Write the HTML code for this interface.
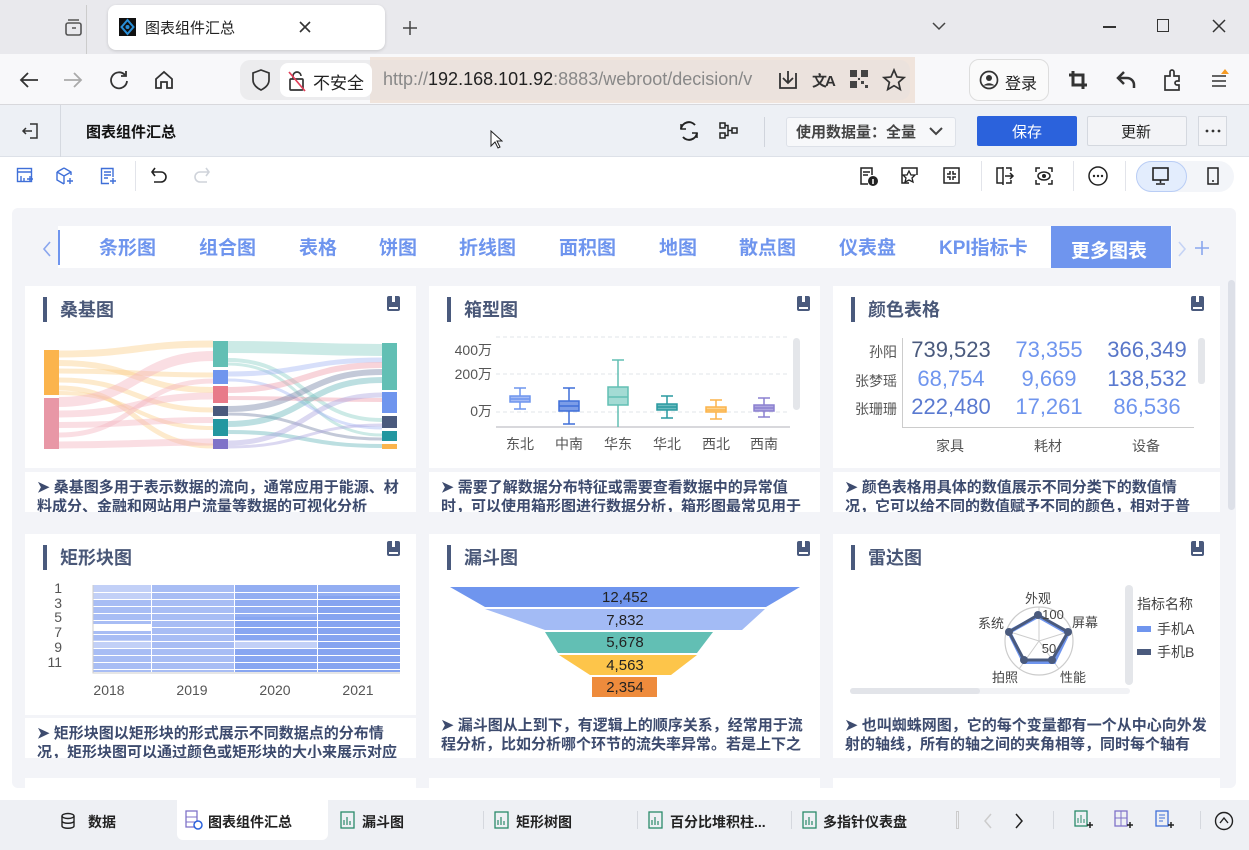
<!DOCTYPE html>
<html><head><meta charset="utf-8">
<style>
*{box-sizing:border-box;margin:0;padding:0}
body{width:1249px;height:850px;overflow:hidden;font-family:"Liberation Sans","Noto Sans CJK SC",sans-serif;background:#fff;position:relative;color:#222}
.a{position:absolute}
.t{position:absolute;white-space:nowrap}
.card{position:absolute;background:#fff}
.ttl{position:absolute;left:18px;top:11px;height:25px;border-left:4px solid #4a5a7d;padding-left:13px;font-size:18px;font-weight:bold;color:#4a5878;line-height:27px}
.bm{position:absolute;width:13px;height:15px;background:#4a5a7d;border-radius:2px}
.bm:after{content:"";position:absolute;left:2px;right:2px;bottom:2px;height:2px;background:#fff}
.bm:before{content:"";position:absolute;left:5px;top:0;width:3px;height:6px;background:#fff}
.desc{position:absolute;background:#fff;font-size:15px;font-weight:bold;color:#3d4b6e;line-height:19px;padding:6px 8px 0 12px;overflow:hidden}
.nav span{position:absolute;top:226px;font-size:19px;font-weight:bold;color:#6f95ee;line-height:46px}
.ic{position:absolute}
</style></head><body>
<div class="a" style="left:0;top:0;width:1249px;height:54px;background:#e9e9ed"></div>
<div class="a" style="left:86px;top:5px;width:1px;height:49px;background:#ccc"></div>
<svg class="ic" style="left:64px;top:18px" width="20" height="20" viewBox="0 0 20 20"><rect x="2" y="5" width="15" height="12" rx="2" fill="none" stroke="#555" stroke-width="1.6"/><path d="M4 2h11M8 10h4" stroke="#555" stroke-width="1.6"/></svg>
<div class="a" style="left:108px;top:5px;width:277px;height:45px;background:#fff;border-radius:8px;box-shadow:0 1px 3px rgba(0,0,0,.15)"></div>
<div class="a" style="left:119px;top:18px;width:17px;height:18px;background:#111"></div>
<svg class="ic" style="left:119px;top:18px" width="17" height="18"><path d="M8.5 2l6 7-6 7-6-7z" fill="none" stroke="#2a8fd8" stroke-width="2"/><circle cx="8.5" cy="9" r="2" fill="#2a8fd8"/></svg>
<div class="t" style="left:145px;top:17px;font-size:15px;color:#222">图表组件汇总</div>
<svg class="ic" style="left:299px;top:21px" width="12" height="12"><path d="M1 1l10 10M11 1L1 11" stroke="#333" stroke-width="1.6"/></svg>
<svg class="ic" style="left:402px;top:20px" width="16" height="16"><path d="M8 1v14M1 8h14" stroke="#444" stroke-width="1.5"/></svg>
<svg class="ic" style="left:930px;top:20px" width="20" height="14"><path d="M3 3l6 6 6-6" fill="none" stroke="#444" stroke-width="1.5"/></svg>
<div class="a" style="left:1103px;top:26px;width:13px;height:1.5px;background:#333"></div>
<div class="a" style="left:1157px;top:19px;width:12px;height:13px;border:1.5px solid #333"></div>
<svg class="ic" style="left:1212px;top:19px" width="14" height="14"><path d="M1 1l12 12M13 1L1 13" stroke="#333" stroke-width="1.5"/></svg>
<div class="a" style="left:0;top:54px;width:1249px;height:51px;background:#f8f8fa;border-bottom:1px solid #d8d8dc"></div>
<svg class="ic" style="left:18px;top:70px" width="22" height="20"><path d="M20 10H4M10 3l-7 7 7 7" fill="none" stroke="#333" stroke-width="1.8"/></svg>
<svg class="ic" style="left:62px;top:70px" width="22" height="20"><path d="M2 10h16M12 3l7 7-7 7" fill="none" stroke="#aaa" stroke-width="1.8"/></svg>
<svg class="ic" style="left:108px;top:69px" width="22" height="22"><path d="M17 6A8 8 0 1 0 19 12" fill="none" stroke="#333" stroke-width="1.8"/><path d="M18 2v5h-5" fill="none" stroke="#333" stroke-width="1.8"/></svg>
<svg class="ic" style="left:153px;top:69px" width="22" height="22"><path d="M3 10L11 3l8 7v9h-5v-6h-6v6H3z" fill="none" stroke="#333" stroke-width="1.8"/></svg>
<div class="a" style="left:240px;top:60px;width:675px;height:40px;background:#ececee;border-radius:10px"></div>
<div class="a" style="left:370px;top:57px;width:545px;height:46px;background:#f0e4dc"></div>
<div class="a" style="left:370px;top:60px;width:540px;height:40px;background:#ebe2dd;border-radius:0 10px 10px 0"></div>
<svg class="ic" style="left:250px;top:68px" width="22" height="24"><path d="M11 2l8 3v7c0 5-4 8-8 10-4-2-8-5-8-10V5z" fill="none" stroke="#333" stroke-width="1.7"/></svg>
<div class="a" style="left:280px;top:63px;width:92px;height:34px;background:#fff;border-radius:8px"></div>
<svg class="ic" style="left:287px;top:69px" width="20" height="24"><rect x="3" y="10" width="13" height="11" rx="1" fill="none" stroke="#333" stroke-width="1.7"/><path d="M6 10V7a4 4 0 0 1 8 0" fill="none" stroke="#333" stroke-width="1.7"/><path d="M2 3l16 19" stroke="#e2405a" stroke-width="1.7"/></svg>
<div class="t" style="left:313px;top:69px;font-size:17px;color:#222">不安全</div>
<div class="t" style="left:383px;top:69px;font-size:18px;color:#888">http://<span style="color:#222">192.168.101.92</span>:8883/webroot/decision/v</div>
<div class="a" style="left:755px;top:62px;width:20px;height:36px;background:#ebe2dd"></div>
<svg class="ic" style="left:776px;top:68px" width="24" height="24"><path d="M4 5v15h16V5M12 3v11M7 10l5 5 5-5" fill="none" stroke="#333" stroke-width="1.8"/></svg>
<div class="t" style="left:812px;top:70px;font-size:15px;color:#333;font-weight:bold;letter-spacing:-2px">文A</div>
<svg class="ic" style="left:849px;top:69px" width="20" height="20"><g fill="#444"><rect x="1" y="1" width="7" height="7"/><rect x="12" y="1" width="7" height="7"/><rect x="1" y="12" width="7" height="7"/><rect x="12" y="12" width="3" height="3"/><rect x="16" y="16" width="3" height="3"/><rect x="9" y="9" width="2" height="2"/></g></svg>
<svg class="ic" style="left:882px;top:68px" width="24" height="24"><path d="M12 2l3 7 7 .6-5.4 4.7 1.7 7.2L12 17.7 5.7 21.5l1.7-7.2L2 9.6 9 9z" fill="none" stroke="#333" stroke-width="1.7"/></svg>
<div class="a" style="left:969px;top:59px;width:80px;height:42px;border:1px solid #ddd;border-radius:10px;background:#fafafa"></div>
<svg class="ic" style="left:979px;top:70px" width="20" height="20"><circle cx="10" cy="10" r="8.5" fill="none" stroke="#333" stroke-width="1.7"/><circle cx="10" cy="8" r="3" fill="#333"/><path d="M4.5 15.5c3-3 8-3 11 0" fill="#333"/></svg>
<div class="t" style="left:1005px;top:70px;font-size:16px;color:#222">登录</div>
<svg class="ic" style="left:1067px;top:69px" width="22" height="22"><path d="M6 2v14h14M2 6h14v14" fill="none" stroke="#333" stroke-width="3"/></svg>
<svg class="ic" style="left:1115px;top:69px" width="22" height="22"><path d="M9 3L3 9l6 6M3 9h9a7 7 0 0 1 7 7v3" fill="none" stroke="#333" stroke-width="2.5"/></svg>
<svg class="ic" style="left:1162px;top:68px" width="22" height="24"><path d="M3 8h5V4a2 2 0 0 1 4 0v4h5v5h-2a2 2 0 0 0 0 4h2v5H3z" fill="none" stroke="#333" stroke-width="1.7"/></svg>
<svg class="ic" style="left:1210px;top:66px" width="22" height="24"><path d="M2 10h14M2 15h14M2 20h14" stroke="#333" stroke-width="1.6"/><path d="M15 3l4 5h-8z" fill="#f59a23"/></svg>
<div class="a" style="left:0;top:105px;width:1249px;height:52px;background:#edf0f5;border-bottom:1px solid #dde1e8"></div>
<div class="a" style="left:60px;top:105px;width:1px;height:52px;background:#d5d9e0"></div>
<svg class="ic" style="left:21px;top:122px" width="20" height="18"><path d="M9 2h7v14H9M2 9h9M5 6L2 9l3 3" fill="none" stroke="#333" stroke-width="1.5"/></svg>
<div class="t" style="left:86px;top:121px;font-size:15px;font-weight:bold;color:#111">图表组件汇总</div>
<svg class="ic" style="left:489px;top:130px" width="14" height="20"><path d="M2 1v15l4-4 3 6 2-1-3-6h5z" fill="#fff" stroke="#222" stroke-width="1"/></svg>
<svg class="ic" style="left:678px;top:120px" width="22" height="22"><path d="M17 5A8 8 0 0 0 3 9M5 17a8 8 0 0 0 14-4" fill="none" stroke="#222" stroke-width="2"/><path d="M3 4v5h5M19 18v-5h-5" fill="none" stroke="#222" stroke-width="1.5"/></svg>
<svg class="ic" style="left:718px;top:121px" width="22" height="20"><rect x="2" y="2" width="5" height="5" fill="none" stroke="#222" stroke-width="1.5"/><rect x="2" y="12" width="5" height="5" fill="none" stroke="#222" stroke-width="1.5"/><rect x="14" y="7" width="5" height="5" fill="none" stroke="#222" stroke-width="1.5"/><path d="M7 4.5h3v10H7M10 9.5h4" fill="none" stroke="#222" stroke-width="1.5"/></svg>
<div class="a" style="left:764px;top:117px;width:1px;height:30px;background:#d0d4dc"></div>
<div class="a" style="left:786px;top:117px;width:170px;height:30px;background:#f7f8fa;border:1px solid #dde1e8;border-radius:3px"></div>
<div class="t" style="left:796px;top:121px;font-size:15px;color:#444;font-weight:bold">使用数据量：全量</div>
<svg class="ic" style="left:928px;top:126px" width="16" height="12"><path d="M2 2l6 6 6-6" fill="none" stroke="#444" stroke-width="2"/></svg>
<div class="a" style="left:977px;top:116px;width:100px;height:30px;background:#2b62dc;border-radius:2px"></div>
<div class="t" style="left:1012px;top:121px;font-size:15px;color:#fff">保存</div>
<div class="a" style="left:1087px;top:116px;width:100px;height:30px;background:#f3f4f7;border:1px solid #d4d8df;border-radius:2px"></div>
<div class="t" style="left:1121px;top:121px;font-size:15px;color:#222">更新</div>
<div class="a" style="left:1198px;top:116px;width:29px;height:30px;background:#f3f4f7;border:1px solid #d4d8df"></div>
<svg class="ic" style="left:1204px;top:129px" width="18" height="4"><circle cx="3" cy="2" r="1.4" fill="#333"/><circle cx="9" cy="2" r="1.4" fill="#333"/><circle cx="15" cy="2" r="1.4" fill="#333"/></svg>
<svg class="ic" style="left:16px;top:167px" width="18" height="18"><rect x="1.5" y="1.5" width="14" height="13" fill="none" stroke="#3f6fd8" stroke-width="1.4"/><path d="M1.5 5h14M5 9v6M8 11v4M11 12h6M14 9v6" stroke="#3f6fd8" stroke-width="1.4"/></svg>
<svg class="ic" style="left:56px;top:167px" width="18" height="18"><path d="M8 1l7 4v3M1 5l7-4M1 5v8l7 4M1 5l7 4 7-4M8 9v8" fill="none" stroke="#3f6fd8" stroke-width="1.4"/><path d="M11 14h6M14 11v6" stroke="#3f6fd8" stroke-width="1.4"/></svg>
<svg class="ic" style="left:100px;top:167px" width="18" height="18"><path d="M13 10V1.5H1.5v15H9M4 5h7M4 8h7M4 11h4M10 14h6M13 11v6" fill="none" stroke="#3f6fd8" stroke-width="1.4"/></svg>
<div class="a" style="left:135px;top:161px;width:1px;height:30px;background:#e2e4ea"></div>
<svg class="ic" style="left:150px;top:166px" width="20" height="18"><path d="M5 2L2 6l3 4M2 6h9a5 5 0 0 1 0 10H4" fill="none" stroke="#222" stroke-width="1.6"/></svg>
<svg class="ic" style="left:191px;top:166px" width="20" height="18"><path d="M15 2l3 4-3 4M18 6H9a5 5 0 0 0 0 10h7" fill="none" stroke="#cfd3da" stroke-width="1.6"/></svg>
<svg class="ic" style="left:859px;top:166px" width="20" height="22"><path d="M13 9V2H2v16h7M4 6h7M4 9h5" fill="none" stroke="#222" stroke-width="1.5"/><circle cx="14" cy="15" r="5" fill="#222"/><path d="M14 13v5" stroke="#fff" stroke-width="1.5"/></svg>
<svg class="ic" style="left:900px;top:166px" width="20" height="20"><path d="M9 17H2V2h15v7" fill="none" stroke="#222" stroke-width="1.5"/><path d="M9 5l2 4h4l-3 3 1 4-4-2-4 2 1-4-3-3h4z" fill="none" stroke="#222" stroke-width="1.3"/></svg>
<svg class="ic" style="left:942px;top:166px" width="20" height="20"><rect x="2" y="2" width="15" height="15" fill="none" stroke="#222" stroke-width="1.5"/><path d="M8 5v3H5M11 5v3h3M8 14v-3H5M11 14v-3h3" fill="none" stroke="#222" stroke-width="1.5"/></svg>
<div class="a" style="left:981px;top:161px;width:1px;height:30px;background:#e2e4ea"></div>
<svg class="ic" style="left:995px;top:166px" width="20" height="20"><path d="M8 2H2v15h6M8 1v18M11 2h5v3M11 17h5v-3M10 10h8M15 7l3 3-3 3" fill="none" stroke="#222" stroke-width="1.5"/></svg>
<svg class="ic" style="left:1034px;top:166px" width="20" height="20"><path d="M2 6V2h4M14 2h4v4M2 14v4h4M18 14v4h-4" fill="none" stroke="#222" stroke-width="1.5"/><ellipse cx="10" cy="10" rx="6" ry="4" fill="none" stroke="#222" stroke-width="1.5"/><circle cx="10" cy="10" r="2" fill="#222"/></svg>
<div class="a" style="left:1073px;top:161px;width:1px;height:30px;background:#e2e4ea"></div>
<svg class="ic" style="left:1087px;top:165px" width="22" height="22"><circle cx="11" cy="11" r="9" fill="none" stroke="#222" stroke-width="1.5"/><circle cx="7" cy="11" r="1.2" fill="#222"/><circle cx="11" cy="11" r="1.2" fill="#222"/><circle cx="15" cy="11" r="1.2" fill="#222"/></svg>
<div class="a" style="left:1125px;top:161px;width:1px;height:30px;background:#e2e4ea"></div>
<div class="a" style="left:1136px;top:161px;width:98px;height:31px;background:#f3f5f9;border-radius:16px"></div>
<div class="a" style="left:1136px;top:161px;width:51px;height:31px;background:#e3edfd;border:1px solid #b9cdf5;border-radius:16px"></div>
<svg class="ic" style="left:1151px;top:166px" width="20" height="20"><rect x="2" y="2" width="15" height="12" fill="none" stroke="#222" stroke-width="1.6"/><path d="M9.5 14v3M5 18h9" stroke="#222" stroke-width="1.6"/></svg>
<svg class="ic" style="left:1205px;top:166px" width="16" height="20"><rect x="3" y="2" width="10" height="16" fill="none" stroke="#222" stroke-width="1.5"/><path d="M7 15h2" stroke="#222" stroke-width="1.5"/></svg>
<div class="a" style="left:12px;top:208px;width:1224px;height:580px;background:#f3f4f8;border-radius:6px"></div>
<svg class="ic" style="left:42px;top:240px" width="10" height="18"><path d="M8 2L2 9l6 7" fill="none" stroke="#8aa6ee" stroke-width="1.6"/></svg>
<div class="a" style="left:58px;top:226px;width:1114px;height:42px;background:#fff"></div>
<div class="a" style="left:58px;top:230px;width:2px;height:35px;background:#6f95ee"></div>
<div class="nav">
<span style="left:99px">条形图</span><span style="left:199px">组合图</span><span style="left:299px">表格</span><span style="left:379px">饼图</span><span style="left:459px">折线图</span><span style="left:559px">面积图</span><span style="left:659px">地图</span><span style="left:739px">散点图</span><span style="left:839px">仪表盘</span><span style="left:939px">KPI指标卡</span>
</div>
<div class="a" style="left:1051px;top:226px;width:120px;height:42px;background:#6f95ee"></div>
<div class="t" style="left:1071px;top:236px;font-size:19px;font-weight:bold;color:#fff">更多图表</div>
<svg class="ic" style="left:1177px;top:240px" width="10" height="18"><path d="M2 2l6 7-6 7" fill="none" stroke="#c5d3f5" stroke-width="1.6"/></svg>
<svg class="ic" style="left:1194px;top:240px" width="16" height="16"><path d="M8 1v14M1 8h14" stroke="#8aa6ee" stroke-width="1.6"/></svg>
<div class="a" style="left:1228px;top:280px;width:7px;height:230px;background:#dde0e8;border-radius:4px"></div>

<div class="card" style="left:25px;top:286px;width:391px;height:182px">
<div class="ttl">桑基图</div><div class="bm" style="left:362px;top:10px"></div>
</div>
<svg class="a" style="left:25px;top:286px" width="391" height="182">
<g transform="translate(-25,-286)" fill="none" stroke-opacity=".45">
<g stroke="#fbd08f">
<path d="M59 354C136 354 136 344 213 344" stroke-width="7"/>
<path d="M59 363C136 363 136 390 213 390" stroke-width="6"/>
<path d="M59 371C136 371 136 375 213 375" stroke-width="5"/>
<path d="M59 380C136 380 136 410 213 410" stroke-width="5"/>
<path d="M59 388C136 388 136 446 213 446" stroke-width="5"/>
<path d="M59 393C136 393 136 428 213 428" stroke-width="4"/>
</g>
<g stroke="#f3b5c0">
<path d="M59 402C136 402 136 356 213 356" stroke-width="10"/>
<path d="M59 414C136 414 136 396 213 396" stroke-width="7"/>
<path d="M59 425C136 425 136 420 213 420" stroke-width="6"/>
<path d="M59 435C136 435 136 381 213 381" stroke-width="5"/>
<path d="M59 445C136 445 136 442 213 442" stroke-width="7"/>
</g>
<path d="M228 347C305 347 305 350 382 350" stroke="#8fd0c8" stroke-width="12"/>
<path d="M228 360C305 360 305 420 382 420" stroke="#8fd0c8" stroke-width="4"/>
<path d="M228 364C305 364 305 435 382 435" stroke="#8fd0c8" stroke-width="3"/>
<path d="M228 374C305 374 305 360 382 360" stroke="#a6b8f5" stroke-width="5"/>
<path d="M228 380C305 380 305 428 382 428" stroke="#a6b8f5" stroke-width="3"/>
<path d="M228 390C305 390 305 365 382 365" stroke="#f0a0ad" stroke-width="6"/>
<path d="M228 398C305 398 305 400 382 400" stroke="#f0a0ad" stroke-width="4"/>
<path d="M228 409C305 409 305 372 382 372" stroke="#7a88a8" stroke-width="6"/>
<path d="M228 414C305 414 305 439 382 439" stroke="#7a88a8" stroke-width="3"/>
<path d="M228 424C305 424 305 380 382 380" stroke="#6ab8bc" stroke-width="6"/>
<path d="M228 432C305 432 305 446 382 446" stroke="#6ab8bc" stroke-width="4"/>
<path d="M228 443C305 443 305 395 382 395" stroke="#b0a8e0" stroke-width="5"/>
<path d="M228 447C305 447 305 425 382 425" stroke="#b0a8e0" stroke-width="3"/>
</g>
<g transform="translate(-25,-286)">
<rect x="44" y="350" width="15" height="45" fill="#fbb44c"/><rect x="44" y="398" width="15" height="51" fill="#e897a6"/>
<rect x="213" y="341" width="15" height="26" fill="#62bfb4"/><rect x="213" y="370" width="15" height="14" fill="#6f95ee"/><rect x="213" y="386" width="15" height="17" fill="#e87a89"/><rect x="213" y="406" width="15" height="10" fill="#4a5a7d"/><rect x="213" y="419" width="15" height="17" fill="#2397a0"/><rect x="213" y="439" width="15" height="10" fill="#7f72c8"/>
<rect x="382" y="343" width="15" height="47" fill="#62bfb4"/><rect x="382" y="392" width="15" height="21" fill="#6f95ee"/><rect x="382" y="416" width="15" height="12" fill="#4a5a7d"/><rect x="382" y="431" width="15" height="10" fill="#2397a0"/><rect x="382" y="444" width="15" height="5" fill="#fbb44c"/>
</g></svg>
<div class="desc" style="left:25px;top:472px;width:391px;height:40px">➤ 桑基图多用于表示数据的流向，通常应用于能源、材料成分、金融和网站用户流量等数据的可视化分析</div>

<div class="card" style="left:429px;top:286px;width:391px;height:182px">
<div class="ttl">箱型图</div><div class="bm" style="left:368px;top:10px"></div>
</div>
<svg class="a" style="left:429px;top:286px" width="391" height="182">
<g transform="translate(-429,-286)" font-family="Liberation Sans,Noto Sans CJK SC,sans-serif" font-size="14" fill="#555">
<path d="M496 337H790M496 374H790M496 412H790" stroke="#e2e4e8" stroke-dasharray="4 3"/>
<path d="M496 427H790" stroke="#d8d8dc" stroke-width="2"/>
<rect x="793" y="338" width="7" height="72" rx="3.5" fill="#e4e6ea"/>
<text x="492" y="355" text-anchor="end">400万</text><text x="492" y="379" text-anchor="end">200万</text><text x="492" y="416" text-anchor="end">0万</text>
<g stroke-width="1.5">
<g stroke="#6f95ee"><path d="M520 388v8M520 402v7M514 388h12M514 409h12"/><rect x="510" y="396" width="20" height="6" fill="#a6bcf5"/><path d="M510 399h20"/></g>
<g stroke="#3f6fd8"><path d="M569 388v13M569 411v13M563 388h12M563 424h12"/><rect x="559" y="401" width="20" height="10" fill="#7c9de8"/><path d="M559 406h20"/></g>
<g stroke="#62bfb4"><path d="M618 360v27M618 405v22M612 360h12"/><rect x="608" y="387" width="20" height="18" fill="#a3dbd4"/><path d="M608 397h20"/></g>
<g stroke="#2a9aa0"><path d="M667 396v8M667 410v8M661 396h12M661 418h12"/><rect x="657" y="404" width="20" height="6" fill="#6cbcc0"/><path d="M657 407h20"/></g>
<g stroke="#fbb44c"><path d="M716 400v7M716 412v7M710 400h12M710 419h12"/><rect x="706" y="407" width="20" height="5" fill="#fcd38f"/><path d="M706 410h20"/></g>
<g stroke="#8c80d0"><path d="M764 398v7M764 411v6M758 398h12M758 417h12"/><rect x="754" y="405" width="20" height="6" fill="#aea6e0"/><path d="M754 408h20"/></g>
</g>
<text x="520" y="449" text-anchor="middle">东北</text><text x="569" y="449" text-anchor="middle">中南</text><text x="618" y="449" text-anchor="middle">华东</text><text x="667" y="449" text-anchor="middle">华北</text><text x="716" y="449" text-anchor="middle">西北</text><text x="764" y="449" text-anchor="middle">西南</text>
</g></svg>
<div class="desc" style="left:429px;top:472px;width:391px;height:40px">➤ 需要了解数据分布特征或需要查看数据中的异常值时，可以使用箱形图进行数据分析，箱形图最常见用于</div>

<div class="card" style="left:833px;top:286px;width:387px;height:182px">
<div class="ttl">颜色表格</div><div class="bm" style="left:358px;top:10px"></div>
</div>
<div class="a" style="left:902px;top:338px;width:1px;height:90px;background:#ccc"></div>
<div class="a" style="left:902px;top:427px;width:292px;height:1px;background:#ccc"></div>
<div class="a" style="left:1198px;top:338px;width:7px;height:46px;background:#e4e6ea;border-radius:3px"></div>
<div class="t" style="left:845px;top:342px;font-size:14px;color:#555;width:52px;text-align:right">孙阳</div>
<div class="t" style="left:845px;top:371px;font-size:14px;color:#555;width:52px;text-align:right">张梦瑶</div>
<div class="t" style="left:845px;top:399px;font-size:14px;color:#555;width:52px;text-align:right">张珊珊</div>
<div style="font-size:22px;color:#6f95ee">
<div class="t" style="left:906px;top:337px;width:90px;text-align:center;color:#4a5a7d">739,523</div>
<div class="t" style="left:1004px;top:337px;width:90px;text-align:center">73,355</div>
<div class="t" style="left:1102px;top:337px;width:90px;text-align:center;color:#5876c8">366,349</div>
<div class="t" style="left:906px;top:366px;width:90px;text-align:center">68,754</div>
<div class="t" style="left:1004px;top:366px;width:90px;text-align:center">9,669</div>
<div class="t" style="left:1102px;top:366px;width:90px;text-align:center;color:#5a7ad0">138,532</div>
<div class="t" style="left:906px;top:394px;width:90px;text-align:center;color:#5a7ad0">222,480</div>
<div class="t" style="left:1004px;top:394px;width:90px;text-align:center">17,261</div>
<div class="t" style="left:1102px;top:394px;width:90px;text-align:center">86,536</div>
</div>
<div class="t" style="left:936px;top:436px;font-size:14px;color:#555">家具</div>
<div class="t" style="left:1034px;top:436px;font-size:14px;color:#555">耗材</div>
<div class="t" style="left:1132px;top:436px;font-size:14px;color:#555">设备</div>
<div class="desc" style="left:833px;top:472px;width:387px;height:40px;padding-right:22px">➤ 颜色表格用具体的数值展示不同分类下的数值情况，它可以给不同的数值赋予不同的颜色，相对于普通</div>

<div class="card" style="left:25px;top:534px;width:391px;height:181px">
<div class="ttl">矩形块图</div><div class="bm" style="left:362px;top:7px"></div>
</div>
<svg class="a" style="left:25px;top:534px" width="391" height="181">
<g transform="translate(-25,-534)" font-family="Liberation Sans,sans-serif" font-size="14" fill="#555">
<rect x="93" y="585" width="307" height="87" fill="#a8bdf4"/>
<g fill="#86a4f0">
<rect x="234" y="585" width="166" height="87" opacity=".6"/>
<rect x="317" y="596" width="83" height="76"/>
<rect x="234" y="617" width="83" height="55" opacity=".8"/>
</g>
<g fill="#c2d0f7"><rect x="93" y="585" width="58" height="14"/><rect x="93" y="640" width="58" height="9"/><rect x="234" y="640" width="83" height="9"/></g>
<rect x="93" y="624" width="58" height="7" fill="#fff"/>
<g stroke="#fff" stroke-width="1"><path d="M93 592.5H400M93 599.5H400M93 606.5H400M93 613.5H400M93 620.5H400M93 627.5H400M93 634.5H400M93 641.5H400M93 648.5H400M93 655.5H400M93 662.5H400M93 669.5H400"/><path d="M151.5 585v87M234.5 585v87M317.5 585v87"/></g>
<path d="M93 585v88H400" stroke="#ccc" fill="none"/>
<text x="62" y="593" text-anchor="end">1</text><text x="62" y="608" text-anchor="end">3</text><text x="62" y="622" text-anchor="end">5</text><text x="62" y="637" text-anchor="end">7</text><text x="62" y="652" text-anchor="end">9</text><text x="62" y="667" text-anchor="end">11</text>
<text x="109" y="695" text-anchor="middle">2018</text><text x="192" y="695" text-anchor="middle">2019</text><text x="275" y="695" text-anchor="middle">2020</text><text x="358" y="695" text-anchor="middle">2021</text>
</g></svg>
<div class="desc" style="left:25px;top:718px;width:391px;height:40px">➤ 矩形块图以矩形块的形式展示不同数据点的分布情况，矩形块图可以通过颜色或矩形块的大小来展示对应</div>

<div class="card" style="left:429px;top:534px;width:391px;height:224px">
<div class="ttl">漏斗图</div><div class="bm" style="left:368px;top:7px"></div>
</div>
<svg class="a" style="left:429px;top:534px" width="391" height="181">
<g transform="translate(-429,-534)" font-family="Liberation Sans,sans-serif" font-size="15" fill="#222" text-anchor="middle">
<path d="M450 587H800L766 607H485z" fill="#6f95ee"/>
<path d="M485 609H765L742 630H545z" fill="#a3bbf5"/>
<path d="M545 632H713L697 653H558z" fill="#62bfb4"/>
<path d="M559 655H697L671 675H590z" fill="#fdc54a"/>
<path d="M592 677H657V697H592z" fill="#ee8b3c"/>
<text x="625" y="602">12,452</text><text x="625" y="625">7,832</text><text x="625" y="647">5,678</text><text x="625" y="670">4,563</text><text x="625" y="692">2,354</text>
</g></svg>
<div class="t" style="left:441px;top:716px;font-size:15px;font-weight:bold;color:#3d4b6e;line-height:19px;white-space:normal;width:372px">➤ 漏斗图从上到下，有逻辑上的顺序关系，经常用于流程分析，比如分析哪个环节的流失率异常。若是上下之</div>

<div class="card" style="left:833px;top:534px;width:387px;height:224px">
<div class="ttl">雷达图</div><div class="bm" style="left:358px;top:7px"></div>
</div>
<svg class="a" style="left:833px;top:534px" width="387" height="181">
<g transform="translate(-833,-534)" font-family="Liberation Sans,Noto Sans CJK SC,sans-serif" font-size="13" fill="#444">
<circle cx="1039" cy="641" r="34" fill="none" stroke="#ccc" stroke-width="1.2"/>
<path d="M1039 641L1039 607M1039 641L1071 631M1039 641L1059 669M1039 641L1019 669M1039 641L1007 631" stroke="#ccc"/>
<path d="M1038 616L1068 633L1054 662L1024 662L1009 632z" fill="none" stroke="#6f95ee" stroke-width="4"/>
<path d="M1038 615L1068 632L1052 660L1024 660L1009 632z" fill="none" stroke="#4a5a7d" stroke-width="3"/>
<g fill="#4a5a7d"><circle cx="1038" cy="615" r="4"/><circle cx="1068" cy="632" r="4"/><circle cx="1052" cy="660" r="4"/><circle cx="1024" cy="660" r="4"/><circle cx="1009" cy="632" r="4"/></g>
<text x="1038" y="603" text-anchor="middle">外观</text><text x="1053" y="619" text-anchor="middle">100</text><text x="1072" y="627">屏幕</text><text x="1004" y="628" text-anchor="end">系统</text><text x="1049" y="653" text-anchor="middle">50</text><text x="1060" y="682">性能</text><text x="1018" y="682" text-anchor="end">拍照</text>
<rect x="1125" y="585" width="8" height="100" rx="4" fill="#e4e6ea"/>
<rect x="850" y="688" width="280" height="6" rx="3" fill="#f1f2f5"/><rect x="850" y="688" width="130" height="6" rx="3" fill="#e2e4e9"/>
<text x="1137" y="609" font-size="14">指标名称</text>
<rect x="1137" y="626" width="14" height="6" fill="#6f95ee"/><text x="1157" y="634" font-size="14">手机A</text>
<rect x="1137" y="649" width="14" height="6" fill="#4a5a7d"/><text x="1157" y="657" font-size="14">手机B</text>
</g></svg>
<div class="t" style="left:845px;top:716px;font-size:15px;font-weight:bold;color:#3d4b6e;line-height:19px;white-space:normal;width:362px">➤ 也叫蜘蛛网图，它的每个变量都有一个从中心向外发射的轴线，所有的轴之间的夹角相等，同时每个轴有</div>

<div class="a" style="left:25px;top:778px;width:391px;height:10px;background:#fff"></div>
<div class="a" style="left:429px;top:778px;width:391px;height:10px;background:#fff"></div>
<div class="a" style="left:833px;top:778px;width:387px;height:10px;background:#fff"></div>

<div class="a" style="left:0;top:800px;width:1249px;height:50px;background:#eef0f4"></div>
<div class="a" style="left:177px;top:800px;width:151px;height:40px;background:#fff;border-radius:0 0 6px 6px"></div>
<svg class="ic" style="left:60px;top:812px" width="16" height="18"><ellipse cx="8" cy="4" rx="6" ry="2.5" fill="none" stroke="#222" stroke-width="1.4"/><path d="M2 4v10c0 3 12 3 12 0V4M2 9c0 3 12 3 12 0" fill="none" stroke="#222" stroke-width="1.4"/></svg>
<div class="t" style="left:88px;top:812px;font-size:14px;font-weight:bold;color:#222">数据</div>
<svg class="ic" style="left:185px;top:810px" width="18" height="20"><rect x="1" y="1" width="11" height="16" fill="none" stroke="#7f72c8" stroke-width="1.3"/><path d="M1 7h11M1 12h11" stroke="#7f72c8"/><circle cx="13" cy="15" r="4" fill="#fff" stroke="#2b62dc" stroke-width="1.5"/></svg>
<div class="t" style="left:208px;top:812px;font-size:14px;font-weight:bold;color:#222">图表组件汇总</div>
<div style="font-size:14px;font-weight:bold;color:#222">
<div class="t" style="left:362px;top:812px">漏斗图</div>
<div class="t" style="left:516px;top:812px">矩形树图</div>
<div class="t" style="left:670px;top:812px">百分比堆积柱...</div>
<div class="t" style="left:823px;top:812px">多指针仪表盘</div>
</div>
<svg class="ic" style="left:340px;top:811px" width="16" height="18"><rect x="1" y="1" width="13" height="16" fill="none" stroke="#2a8a6a" stroke-width="1.3"/><path d="M4 14V9M7 14V6M10 14V10" stroke="#2a8a6a" stroke-width="1.2"/></svg>
<svg class="ic" style="left:494px;top:811px" width="16" height="18"><rect x="1" y="1" width="13" height="16" fill="none" stroke="#2a8a6a" stroke-width="1.3"/><path d="M4 14V9M7 14V6M10 14V10" stroke="#2a8a6a" stroke-width="1.2"/></svg>
<svg class="ic" style="left:648px;top:811px" width="16" height="18"><rect x="1" y="1" width="13" height="16" fill="none" stroke="#2a8a6a" stroke-width="1.3"/><path d="M4 14V9M7 14V6M10 14V10" stroke="#2a8a6a" stroke-width="1.2"/></svg>
<svg class="ic" style="left:802px;top:811px" width="16" height="18"><rect x="1" y="1" width="13" height="16" fill="none" stroke="#2a8a6a" stroke-width="1.3"/><path d="M4 14V9M7 14V6M10 14V10" stroke="#2a8a6a" stroke-width="1.2"/></svg>
<div class="a" style="left:483px;top:811px;width:1px;height:18px;background:#d5d8de"></div>
<div class="a" style="left:637px;top:811px;width:1px;height:18px;background:#d5d8de"></div>
<div class="a" style="left:791px;top:811px;width:1px;height:18px;background:#d5d8de"></div>
<div class="a" style="left:956px;top:811px;width:3px;height:18px;border:1px solid #ccc"></div>
<svg class="ic" style="left:982px;top:812px" width="12" height="18"><path d="M9 2L3 9l6 7" fill="none" stroke="#ccc" stroke-width="1.5"/></svg>
<svg class="ic" style="left:1013px;top:812px" width="12" height="18"><path d="M3 2l6 7-6 7" fill="none" stroke="#222" stroke-width="1.5"/></svg>
<div class="a" style="left:1053px;top:811px;width:1px;height:18px;background:#d5d8de"></div>
<svg class="ic" style="left:1074px;top:810px" width="20" height="20"><rect x="1" y="1" width="12" height="15" fill="none" stroke="#2a8a6a" stroke-width="1.3"/><path d="M4 13V8M7 13V5M10 13V9" stroke="#2a8a6a"/><path d="M13 15h6M16 12v6" stroke="#222" stroke-width="1.5"/></svg>
<svg class="ic" style="left:1114px;top:810px" width="20" height="20"><rect x="1" y="1" width="12" height="15" fill="none" stroke="#7f72c8" stroke-width="1.3"/><path d="M1 8h12M7 1v15" stroke="#7f72c8"/><path d="M13 15h6M16 12v6" stroke="#222" stroke-width="1.5"/></svg>
<svg class="ic" style="left:1155px;top:810px" width="20" height="20"><rect x="1" y="1" width="12" height="15" fill="none" stroke="#3f6fd8" stroke-width="1.3"/><path d="M4 5h6M4 8h6M4 11h4" stroke="#3f6fd8"/><path d="M13 15h6M16 12v6" stroke="#222" stroke-width="1.5"/></svg>
<div class="a" style="left:1200px;top:811px;width:1px;height:18px;background:#d5d8de"></div>
<svg class="ic" style="left:1214px;top:811px" width="20" height="20"><circle cx="10" cy="10" r="8.5" fill="none" stroke="#222" stroke-width="1.4"/><path d="M6 12l4-5 4 5" fill="none" stroke="#222" stroke-width="1.4"/></svg>
</body></html>
